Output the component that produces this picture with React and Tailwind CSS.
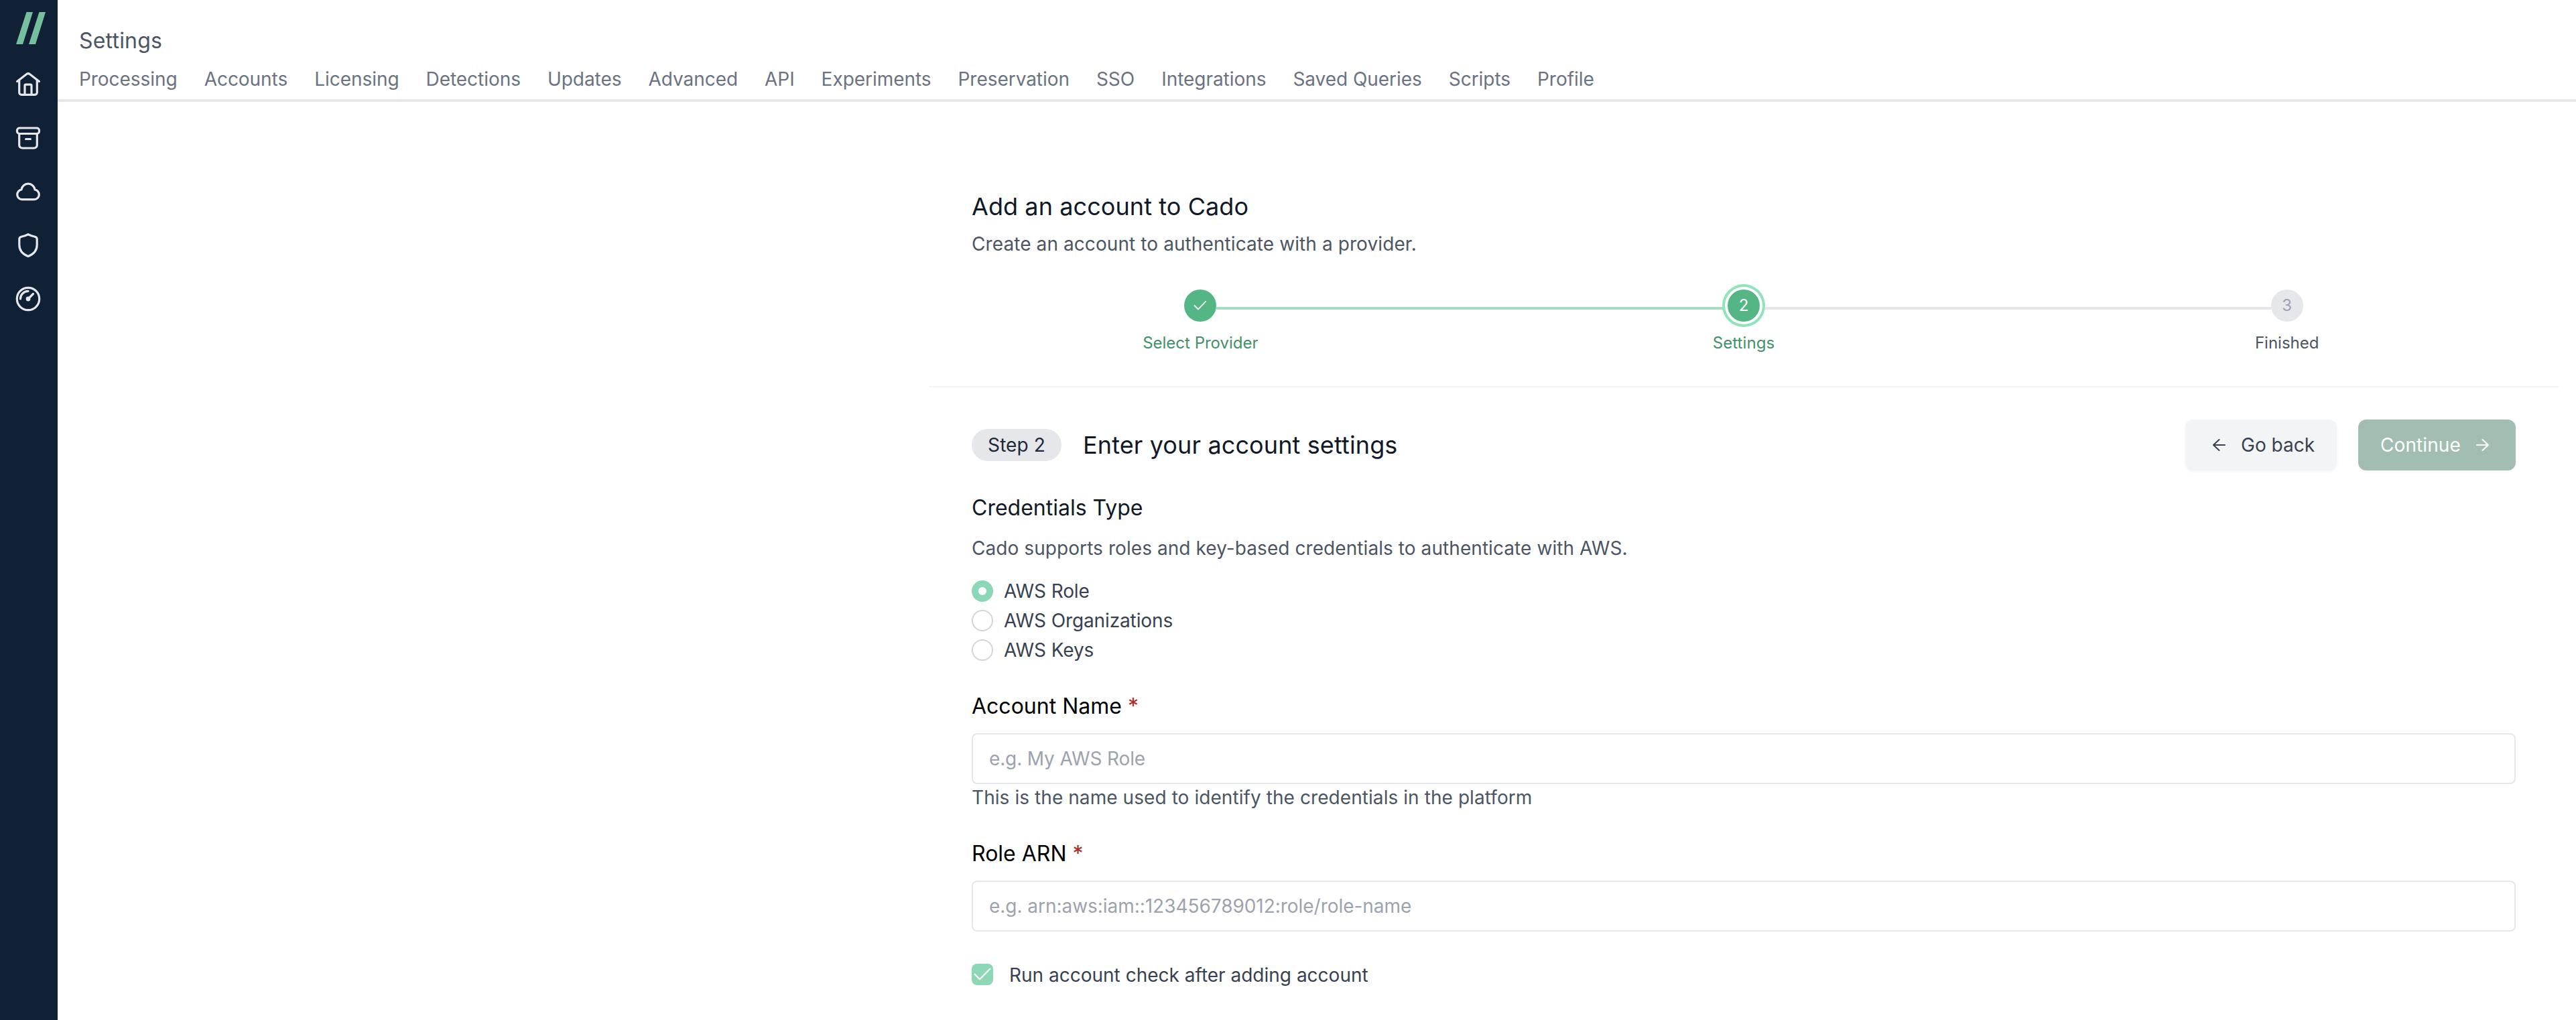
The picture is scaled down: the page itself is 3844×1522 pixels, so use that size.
import React from "react";

const TABS = [
  "Processing", "Accounts", "Licensing", "Detections", "Updates", "Advanced", "API",
  "Experiments", "Preservation", "SSO", "Integrations", "Saved Queries", "Scripts", "Profile",
];

function NavIcon({ children }) {
  return (
    <a className="flex h-20 w-full items-center justify-center pr-0.5">
      <svg className="size-12" viewBox="0 0 48 48" fill="none" stroke="#e5e7eb" strokeWidth="3.2" strokeLinecap="round" strokeLinejoin="round">
        {children}
      </svg>
    </a>
  );
}

function Sidebar() {
  return (
    <aside className="flex w-[86px] shrink-0 flex-col bg-[#102136]">
      <svg className="mt-[18px] mb-5 ml-6 h-12 w-11 shrink-0" viewBox="0 0 44 48" fill="#75bf9f">
        <path d="M15.5 0H25L10 48H0Z" />
        <path d="M34.500 0H44L29 48H19Z" />
      </svg>
      <NavIcon>
        <path d="M7.600 19.500L21.800 8.600a3.600 3.600 0 0 1 4.400 0L40.400 19.500" />
        <path d="M10.700 17.500V36a3.300 3.300 0 0 0 3.300 3.300H34a3.300 3.300 0 0 0 3.300-3.300V17.500" />
        <path d="M19 39V25.700a1.500 1.500 0 0 1 1.500-1.500h7a1.500 1.500 0 0 1 1.500 1.500V39" />
      </NavIcon>
      <NavIcon>
        <rect x="7.500" y="9" width="33" height="8.500" rx="3.500" />
        <path d="M10.700 17.500V34.500a4.500 4.500 0 0 0 4.500 4.500H32.800a4.500 4.500 0 0 0 4.500-4.500V17.500" />
        <path d="M20.600 25.500h6.800" />
      </NavIcon>
      <NavIcon>
        <path d="M14.900 35.700H33.100a7.400 7.400 0 0 0 1-14.700a10.200 10.200 0 0 0-20.200 0a7.400 7.400 0 0 0 1 14.700Z" />
      </NavIcon>
      <NavIcon>
        <path d="M24 7.700C27.200 9.300 30.600 10.400 34.200 11.200C36.200 11.700 37.200 13 37.200 15V23.500C37.200 32 31.500 37.500 24 40.400C16.500 37.500 10.800 32 10.800 23.500V15C10.800 13 11.800 11.700 13.800 11.200C17.400 10.400 20.800 9.300 24 7.700Z" />
      </NavIcon>
      <NavIcon>
        <circle cx="24" cy="24" r="16.700" />
        <path d="M12.400 24A11.600 11.600 0 0 1 24 12.400" />
        <circle cx="24" cy="24" r="1.800" fill="#e5e7eb" />
        <path d="M24 24L31.500 16.500" />
      </NavIcon>
    </aside>
  );
}

function Header() {
  return (
    <header className="flex h-[152px] flex-col border-b-4 border-gray-200 pt-[37px] pl-8">
      <h1 className="text-[32px] leading-[48px] tracking-[0.2px] text-[#4b5563]">Settings</h1>
      <nav className="mt-[13px] flex gap-10 text-[28px] leading-10 tracking-[-0.045px] text-[#6b7280]">
        {TABS.map((t) => <a key={t} className="whitespace-nowrap">{t}</a>)}
      </nav>
    </header>
  );
}

function Step({ label, labelClass, circleClass, left, right, children }) {
  return (
    <li className="flex flex-1 flex-col items-center">
      <div className="flex w-full items-center">
        <div className={"mt-2 h-1 flex-1 " + left} />
        <div className={"relative flex size-12 items-center justify-center rounded-full text-2xl " + circleClass}>{children}</div>
        <div className={"mt-2 h-1 flex-1 " + right} />
      </div>
      <span className={"mt-4 text-2xl leading-8 " + labelClass}>{label}</span>
    </li>
  );
}

function Stepper() {
  return (
    <ol className="flex h-[146px] border-b-2 border-[#f3f4f6]">
      <Step label="Select Provider" labelClass="text-[#3f9268]" circleClass="bg-[#55b685] text-white" left="bg-transparent" right="bg-[#a9dbc0]">
        <svg className="size-5" viewBox="0 0 20 20" fill="none" stroke="white" strokeWidth="1.8" strokeLinecap="round" strokeLinejoin="round">
          <path d="M1.500 10L7 15.500L18 4" />
        </svg>
      </Step>
      <Step label="Settings" labelClass="tracking-[0.1px] text-[#3f9268]" circleClass="bg-[#55b685] text-white ring-4 ring-[#8ee4bb] ring-offset-4 ring-offset-white" left="bg-[#a9dbc0]" right="bg-[#e5e7eb]">2</Step>
      <Step label="Finished" labelClass="text-[#4b5563]" circleClass="bg-[#e5e7eb] text-[#9ca3af]" left="bg-[#e5e7eb]" right="bg-transparent">3</Step>
    </ol>
  );
}

function Radio({ label, checked }) {
  return (
    <label className="flex h-11 items-center gap-4">
      {checked ? (
        <span className="flex size-8 items-center justify-center rounded-full bg-[#8cd7b5]">
          <span className="size-3 rounded-full bg-white" />
        </span>
      ) : (
        <span className="size-8 rounded-full border-2 border-[#d1d5db] bg-white" />
      )}
      <span className="tracking-[-0.12px]">{label}</span>
    </label>
  );
}

function Field({ label, placeholder, className, inputClass }) {
  return (
    <div className={"flex flex-col " + className}>
      <label className="text-[32px] leading-[48px] text-black">
        {label} <span className="text-[#b02a25]">*</span>
      </label>
      <input
        className={"mt-4 h-[76px] w-full rounded-lg border-2 border-gray-200 bg-white px-6 text-[28px] placeholder:text-[#9ca3af] " + inputClass}
        placeholder={placeholder}
      />
    </div>
  );
}

export default function App() {
  return (
    <div className="flex h-[1522px] w-full overflow-hidden bg-white font-['Inter',sans-serif] text-[28px] leading-10 text-[#374151]">
      <Sidebar />
      <div className="flex min-w-0 flex-1 flex-col">
        <Header />
        <main className="mr-[26px] ml-[1300px] flex flex-col pt-[128px]">
          <div className="px-16">
            <h2 className="text-4xl leading-[56px] tracking-[0.08px] text-[#111827]">Add an account to Cado</h2>
            <p className="mt-2 tracking-[0.09px] text-[#4b5563]">Create an account to authenticate with a provider.</p>
          </div>
          <div className="mt-12">
            <Stepper />
          </div>
          <section className="flex flex-col px-16 pt-12">
            <div className="flex h-[76px] items-center">
              <span className="flex h-12 w-[134px] items-center justify-center rounded-full bg-gray-200 tracking-[0.1px] text-[#1f2937]">Step 2</span>
              <h3 className="ml-8 text-4xl tracking-[0.12px] text-[#111827]">Enter your account settings</h3>
              <div className="ml-auto flex gap-8">
                <button className="flex h-[76px] w-[226px] items-center rounded-xl bg-[#f3f4f6] pl-10 shadow-[0_2px_4px_rgba(0,0,0,0.05)]">
                  <svg className="mr-[23px] size-5" viewBox="0 0 20 20" fill="none" stroke="#374151" strokeWidth="2" strokeLinecap="round" strokeLinejoin="round">
                    <path d="M19 10H2M10.500 2L2 10L10.500 18" />
                  </svg>
                  Go back
                </button>
                <button className="flex h-[76px] w-[235px] items-center rounded-xl bg-[#a2bdb1] pl-[33px] text-white shadow-[0_2px_4px_rgba(0,0,0,0.03)]">
                  <span className="tracking-[0.1px]">Continue</span>
                  <svg className="ml-[23px] size-5" viewBox="0 0 20 20" fill="none" stroke="white" strokeWidth="2" strokeLinecap="round" strokeLinejoin="round">
                    <path d="M1 10H18M9.500 2L18 10L9.500 18" />
                  </svg>
                </button>
              </div>
            </div>
            <h4 className="mt-8 text-[32px] leading-[48px] text-[#111827]">Credentials Type</h4>
            <p className="mt-4 tracking-[0.07px] text-[#4b5563]">Cado supports roles and key-based credentials to authenticate with AWS.</p>
            <div className="mt-[22px] flex flex-col">
              <Radio label="AWS Role" checked />
              <Radio label="AWS Organizations" />
              <Radio label="AWS Keys" />
            </div>
            <Field className="mt-[38px]" inputClass="tracking-[-0.14px]" label="Account Name" placeholder="e.g. My AWS Role" />
            <p className="tracking-[0.07px] text-[#4b5563]">This is the name used to identify the credentials in the platform</p>
            <Field className="mt-10" inputClass="tracking-[-0.04px]" label="Role ARN" placeholder="e.g. arn:aws:iam::123456789012:role/role-name" />
            <label className="mt-11 flex h-10 items-center gap-6">
              <span className="flex size-8 items-center justify-center rounded-lg bg-[#8cd7b5]">
                <svg className="size-8" viewBox="0 0 32 32" fill="none" stroke="white" strokeWidth="2.2" strokeLinecap="round" strokeLinejoin="round">
                  <path d="M4.700 15.700L12 23.300L27.300 7.700" />
                </svg>
              </span>
              <span className="pt-0.5">Run account check after adding account</span>
            </label>
          </section>
        </main>
      </div>
    </div>
  );
}
